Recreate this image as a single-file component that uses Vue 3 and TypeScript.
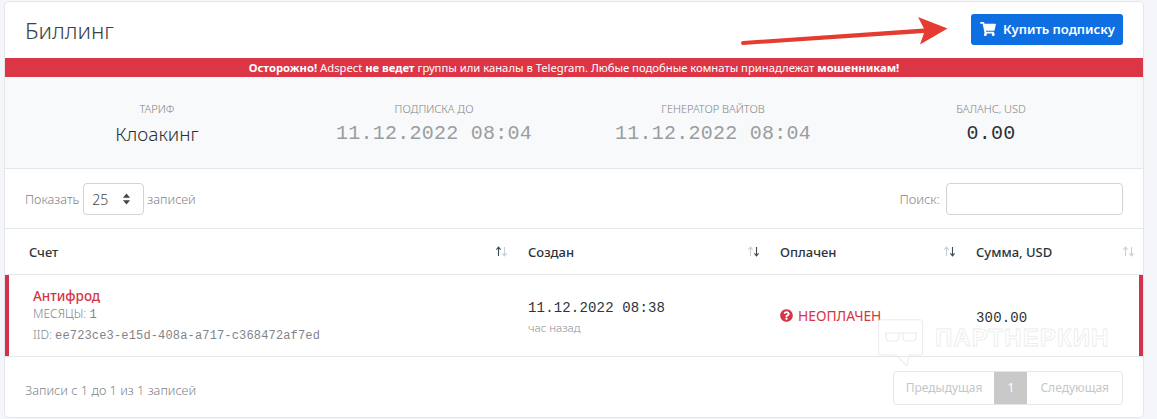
<script setup lang="ts">
interface Stat { label: string; value: string; kind: string }
const stats: Stat[] = [
  { label: 'ТАРИФ', value: 'Клоакинг', kind: 'plain' },
  { label: 'ПОДПИСКА ДО', value: '11.12.2022 08:04', kind: 'date' },
  { label: 'ГЕНЕРАТОР ВАЙТОВ', value: '11.12.2022 08:04', kind: 'date' },
  { label: 'БАЛАНС, USD', value: '0.00', kind: 'money' },
]
const cartPath = 'M528.12 301.319l47.273-208C578.806 78.301 567.391 64 551.99 64H159.208l-9.166-44.81C147.758 8.021 137.93 0 126.529 0H24C10.745 0 0 10.745 0 24v16c0 13.255 10.745 24 24 24h69.883l70.248 343.435C147.325 417.1 136 435.222 136 456c0 30.928 25.072 56 56 56s56-25.072 56-56c0-15.674-6.447-29.835-16.824-40h209.647C430.447 426.165 424 440.326 424 456c0 30.928 25.072 56 56 56s56-25.072 56-56c0-22.172-12.888-41.332-31.579-50.405l5.517-24.276c3.413-15.018-8.002-29.319-23.403-29.319H218.117l-6.545-32h293.145c11.206 0 20.92-7.754 23.403-18.681z'
const questionPath = 'M504 256c0 136.997-111.043 248-248 248S8 392.997 8 256C8 119.083 119.043 8 256 8s248 111.083 248 248zM262.655 90c-54.497 0-89.255 22.957-116.549 63.758-3.536 5.286-2.353 12.415 2.715 16.258l34.699 26.31c5.205 3.947 12.621 3.008 16.665-2.122 17.864-22.658 30.113-35.797 57.303-35.797 20.429 0 45.698 13.148 45.698 32.958 0 14.976-12.363 22.667-32.534 33.976C247.128 238.528 216 254.941 216 296v4c0 6.627 5.373 12 12 12h56c6.627 0 12-5.373 12-12v-1.333c0-28.462 83.186-29.647 83.186-106.667 0-58.002-60.165-102-116.531-102zM256 338c-25.365 0-46 20.635-46 46 0 25.364 20.635 46 46 46s46-20.636 46-46c0-25.365-20.635-46-46-46z'
interface Col { title: string; up: boolean; down: boolean }
const cols: Col[] = [
  { title: 'Счет', up: true, down: false },
  { title: 'Создан', up: false, down: true },
  { title: 'Оплачен', up: false, down: true },
  { title: 'Сумма, USD', up: false, down: false },
]
</script>

<template>
  <div class="page">
    <section class="card">
      <header class="head">
        <h1>Биллинг</h1>
        <button class="buy" type="button">
          <svg class="cart" viewBox="0 0 576 512"><path :d="cartPath" /></svg>
          Купить подписку
        </button>
      </header>
      <div class="alert">
        <b>Осторожно!</b> Adspect <b>не ведет</b> группы или каналы в Telegram. Любые подобные комнаты принадлежат <b>мошенникам!</b>
      </div>
      <div class="stats">
        <div v-for="s in stats" :key="s.label" class="stat">
          <div class="label">{{ s.label }}</div>
          <div :class="['value', s.kind]">{{ s.value }}</div>
        </div>
      </div>
      <div class="tools">
        <div class="show">
          <span>Показать</span>
          <span class="select">25
            <svg class="updown" viewBox="0 0 10 14"><path d="M5 1 9 5.600H1zM5 13 1 8.400h8z" /></svg>
          </span>
          <span>записей</span>
        </div>
        <div class="search">
          <span>Поиск:</span>
          <span class="input"></span>
        </div>
      </div>
      <table class="table">
        <colgroup>
          <col class="c1" /><col class="c2" /><col class="c3" /><col class="c4" />
        </colgroup>
        <thead>
          <tr>
            <th v-for="c in cols" :key="c.title">
              <div class="th">
                <span>{{ c.title }}</span>
                <svg class="sort" viewBox="0 0 13 11">
                  <path :class="c.up ? 'on' : 'off'" d="M3.500 10V1.500M1.400 3.600 3.500 1.200l2.100 2.400" />
                  <path :class="c.down ? 'on' : 'off'" d="M9.500 1v8.500M7.400 7.400l2.100 2.400 2.100-2.400" />
                </svg>
              </div>
            </th>
          </tr>
        </thead>
        <tbody>
          <tr>
            <td class="first">
              <div class="name">Антифрод</div>
              <div class="sub">МЕСЯЦЫ: <span class="mono">1</span></div>
              <div class="sub iid">IID: <span class="mono">ee723ce3-e15d-408a-a717-c368472af7ed</span></div>
            </td>
            <td>
              <div class="created">11.12.2022 08:38</div>
              <div class="ago">час назад</div>
            </td>
            <td>
              <span class="unpaid">
                <svg class="q" viewBox="0 0 512 512"><path :d="questionPath" /></svg>
                НЕОПЛАЧЕН
              </span>
            </td>
            <td class="last"><span class="sum">300.00</span></td>
          </tr>
        </tbody>
      </table>
      <footer class="foot">
        <span class="info">Записи с 1 до 1 из 1 записей</span>
        <div class="pager">
          <span class="prev">Предыдущая</span>
          <span class="cur">1</span>
          <span>Следующая</span>
        </div>
      </footer>

      <svg class="arrow" viewBox="0 0 220 40" aria-hidden="true">
        <path d="M3 25 184 12.500 178 1 207.500 12.500 180 28.500 184 17 3 29a2 2 0 0 1 0-4Z" />
      </svg>
      <div class="mark" aria-hidden="true">
        <svg class="bubble" viewBox="0 0 46 48">
          <path d="M3 .700H42a2.500 2.500 0 0 1 2.500 2.500V33.500a2.500 2.500 0 0 1-2.500 2.500H31L29 47 18 36H3a2.500 2.500 0 0 1-2.500-2.500V3.200A2.500 2.500 0 0 1 3 .700Z" />
          <path d="M7 14H39M8 14v4c0 3 2 4 4 4h5c2 0 4-1 4-4v-4M25 14v4c0 3 2 4 4 4h5c2 0 4-1 4-4v-4" />
        </svg>
        <span class="marktext">ПАРТНЕРКИН</span>
      </div>
    </section>
  </div>
</template>

<style>
html, body { margin: 0; background: #f4f6fa; }
</style>

<style scoped>
.page {
  height: 419px;
  padding: 1px 13px 0 4px;
  box-sizing: border-box;
  overflow: hidden;
  font-family: "Noto Sans", "Liberation Sans", sans-serif;
}
.card {
  position: relative;
  height: 417px;
  background: #fff;
  border: 1px solid #e3e6ea;
  border-radius: 5px;
  box-sizing: border-box;
}
.head {
  height: 56px;
  display: flex;
  align-items: center;
  justify-content: space-between;
  padding: 0 20px;
}
h1 {
  margin: 0;
  font-size: 22.500px;
  font-weight: 300;
  color: #3b4248;
}
.buy {
  display: flex;
  align-items: center;
  gap: 7px;
  height: 31px;
  width: 152px;
  margin-top: -2px;
  padding: 0 0 0 9px;
  border: 0;
  border-radius: 3px;
  background: #0e6fe3;
  color: #fff;
  font: 600 13px "Noto Sans", sans-serif;
}
.cart { width: 16px; height: 14px; fill: #fff; }
.alert {
  height: 19px;
  line-height: 19px;
  background: #dc3545;
  color: #fff;
  text-align: center;
  font-size: 11.250px;
  white-space: nowrap;
}
.alert b { font-weight: 700; }
.stats {
  height: 92px;
  background: #f8f9fa;
  border-bottom: 1px solid #e3e6ea;
  display: flex;
  padding-top: 24px;
  box-sizing: border-box;
  text-align: center;
}
.stat { flex: none; }
.stat:nth-child(1) { width: 200px; margin-left: 52px; }
.stat:nth-child(2) { width: 250px; margin-left: 52px; }
.stat:nth-child(3) { width: 248px; margin-left: 30px; }
.stat:nth-child(4) { width: 240px; margin-left: 34px; }
.label {
  font-size: 11px;
  line-height: 16px;
  font-weight: 300;
  color: #7f8489;
}
.value {
  margin-top: 3px;
  line-height: 28px;
  color: #2a3036;
}
.plain { font-size: 19px; font-weight: 300; }
.date, .money { font-family: "Liberation Mono", monospace; font-size: 20px; letter-spacing: .24px; }
.date { color: #9a9da0; }
.money { color: #2a3036; }
.tools {
  height: 59px;
  display: flex;
  align-items: center;
  justify-content: space-between;
  padding: 0 20px;
  border-bottom: 1px solid #e3e6ea;
  color: #7f8489;
  font-size: 12.750px;
  font-weight: 300;
}
.show, .search { display: flex; align-items: center; gap: 4px; }
.show span:last-child { margin-left: -1px; }
.search { gap: 6px; font-size: 13px; }
.select {
  position: relative;
  width: 61px;
  height: 32px;
  box-sizing: border-box;
  border: 1px solid #ced4da;
  border-radius: 4px;
  padding-left: 8px;
  line-height: 31px;
  font-size: 14px;
  color: #40464c;
}
.updown { position: absolute; right: 12px; top: 8px; width: 9px; height: 14px; fill: #40464c; }
.input {
  width: 177px;
  height: 32px;
  box-sizing: border-box;
  border: 1px solid #ced4da;
  border-radius: 4px;
}
.table {
  width: 100%;
  table-layout: fixed;
  border-collapse: collapse;
}
.c1 { width: 511px; }
.c2 { width: 252px; }
.c3 { width: 196px; }
.c4 { width: 179px; }
th {
  height: 45px;
  padding: 0 8px 0 12px;
  border-bottom: 1px solid #e3e6ea;
  font-size: 13px;
  font-weight: 500;
  color: #2d3338;
  text-align: left;
}
th:first-child { padding-left: 24px; }
.th { display: flex; align-items: center; justify-content: space-between; }
.sort { width: 13px; height: 11px; fill: none; stroke-width: 1.100; }
.on { stroke: #3c4a54; }
.off { stroke: #c9ced3; }
td {
  height: 82px;
  padding: 0 12px;
  border-bottom: 1px solid #e3e6ea;
  box-sizing: border-box;
  vertical-align: middle;
  color: #2d3338;
}
td.first { box-shadow: inset 4px 0 0 #d2334a; padding: 1px 12px 0 28px; }
td.last { box-shadow: inset -4px 0 0 #d2334a; }
.name { font-size: 13.500px; font-weight: 500; color: #d63447; line-height: 20px; margin-bottom: -2px; }
.sub { font-size: 12px; color: #7f8489; line-height: 19px; font-weight: 300; }
.mono { font-family: "Liberation Mono", monospace; font-size: 12px; font-weight: 400; }
.iid .mono { letter-spacing: .16px; }
.created { font-family: "Liberation Mono", monospace; font-size: 14px; color: #2d3338; letter-spacing: .17px; line-height: 22px; padding-top: 1px; }
.ago { font-size: 11.500px; color: #8a8f94; font-weight: 300; line-height: 17px; }
.unpaid { display: inline-flex; align-items: center; gap: 5px; color: #d63447; font-size: 13.800px; }
.q { width: 13px; height: 13px; fill: #d63447; }
.sum { font-family: "Liberation Mono", monospace; font-size: 14px; letter-spacing: .17px; color: #2d3338; }
.foot {
  height: 60px;
  display: flex;
  align-items: center;
  justify-content: space-between;
  padding: 0 20px;
  color: #7f8489;
  font-size: 12.750px;
  font-weight: 300;
}
.info { margin-top: 6px; }
.pager {
  display: flex;
  height: 34px;
  margin-top: 2px;
  border: 1px solid #e3e6ea;
  border-radius: 4px;
  box-sizing: border-box;
  color: #c4c7ca;
  font-size: 12px;
  font-weight: 400;
  line-height: 32px;
}
.pager span { padding: 0 13px; }
.pager .prev { padding: 0 12px; }
.pager .cur { background: #c9c9c9; color: #fff; padding: 0; width: 33px; text-align: center; }
.arrow {
  position: absolute;
  left: 735px;
  top: 14px;
  width: 220px;
  height: 40px;
}
.arrow path { fill: #e53c31; }
.mark {
  position: absolute;
  left: 873px;
  top: 317px;
  display: flex;
  align-items: flex-start;
  gap: 11px;
  pointer-events: none;
}
.bubble { width: 46px; height: 48px; fill: none; stroke: #ececec; stroke-width: 1.100; }
.marktext {
  margin-top: 5px;
  font: 700 24px "Liberation Sans", sans-serif;
  letter-spacing: 1.100px;
  color: transparent;
  -webkit-text-stroke: .8px #ececec;
}
</style>
